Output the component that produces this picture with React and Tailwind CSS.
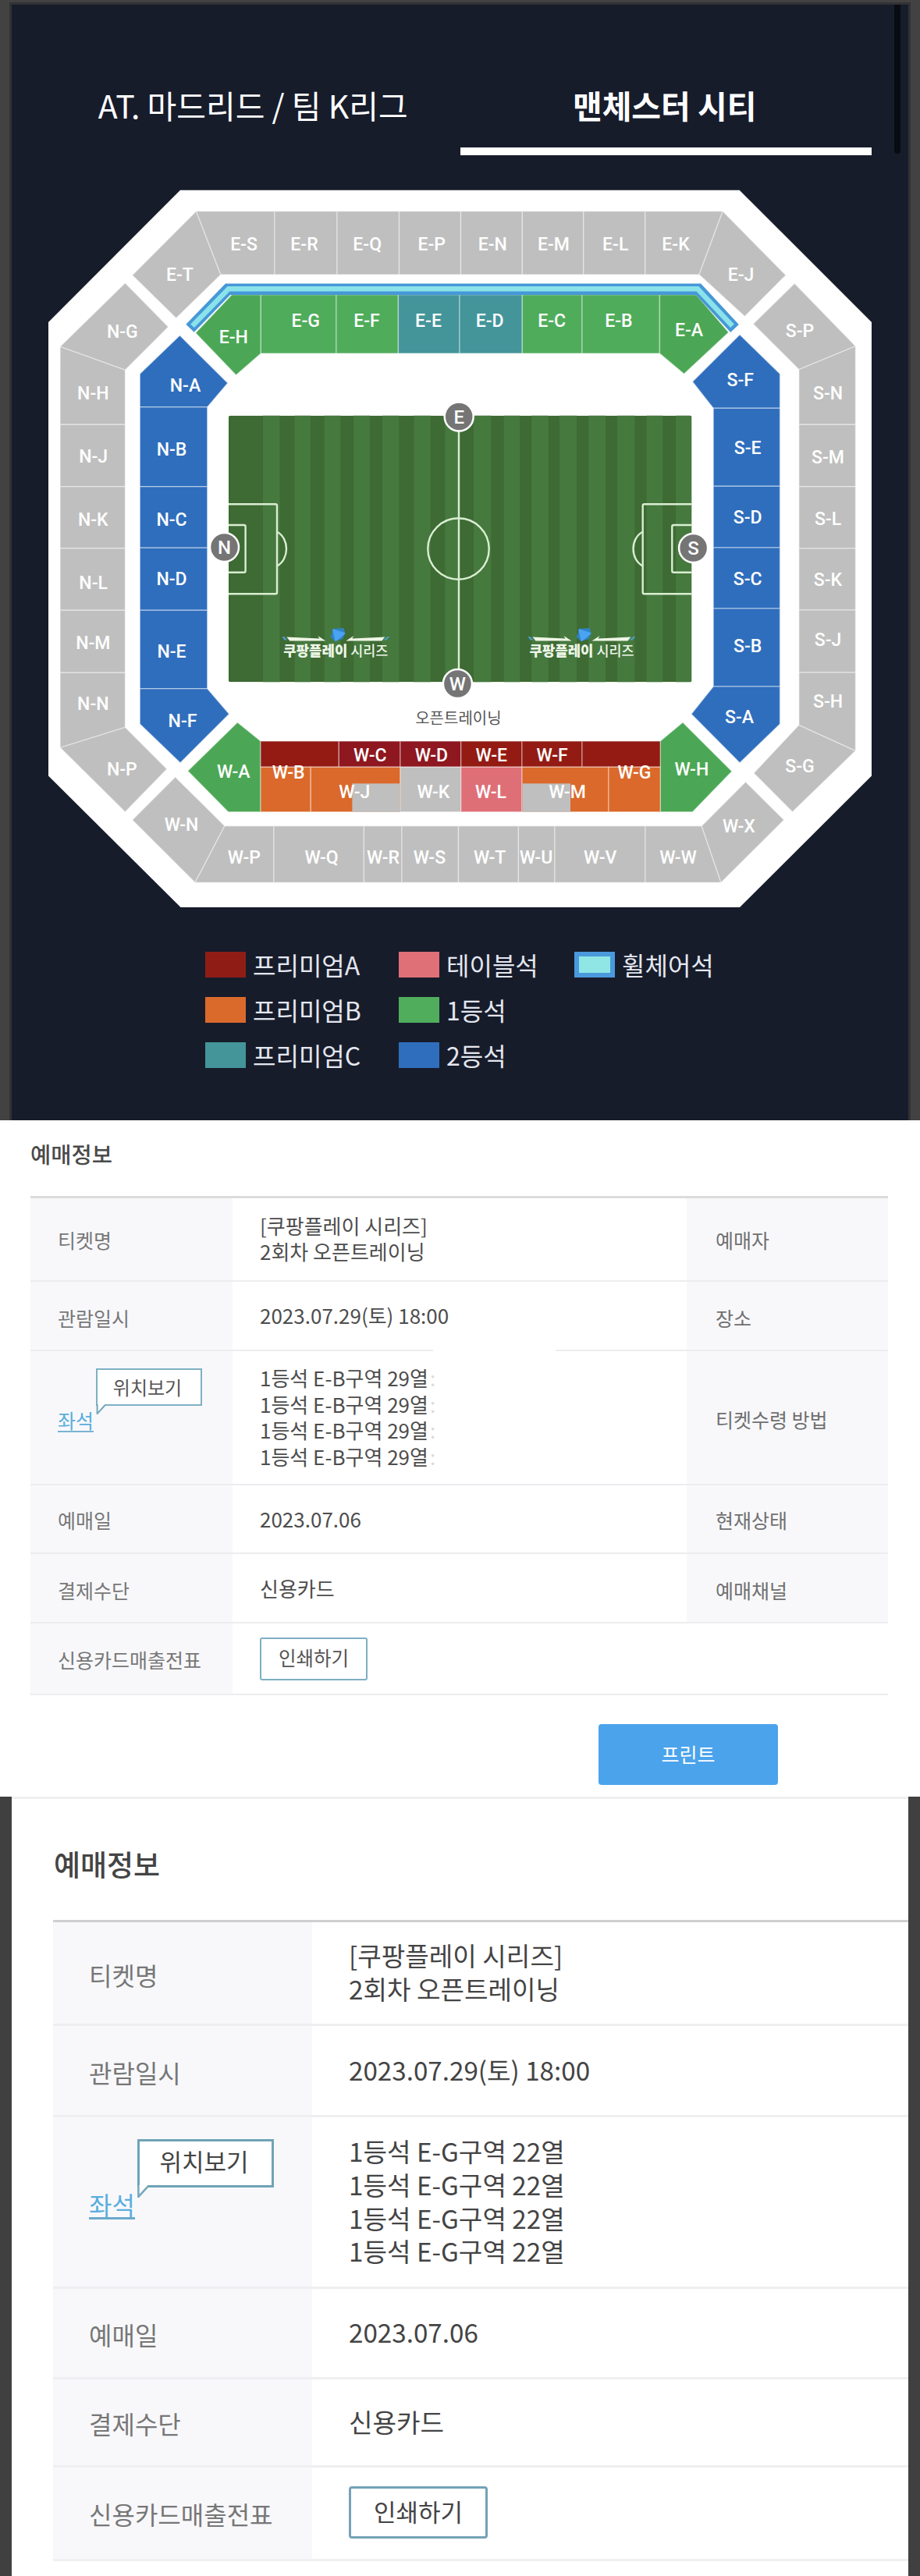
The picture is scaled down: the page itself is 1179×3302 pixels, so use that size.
const GRAY = "#bfbfbf";
const GREEN = "#4fac5b";
const DEEP_GREEN = "#4ba755";
const TEAL = "#43959a";
const BLUE = "#2f6ebd";
const RED = "#931b13";
const CRIMSON = "#8e1720";
const ORANGE = "#da692b";
const PINK = "#df6f77";

const box = (x1, y1, x2, y2) => `${x1},${y1} ${x2},${y1} ${x2},${y2} ${x1},${y2}`;

// Each block: [polygon points, fill]
const blocks = [
  // outer ring, east
  ["251.4,270.7 169.6,352.7 225.7,407.7 282.9,352", GRAY],
  ["251.4,270.7 352,270.7 352,352 282.9,352", GRAY],
  [box(352, 270.7, 432, 352), GRAY],
  [box(432, 270.7, 511.5, 352), GRAY],
  [box(511.5, 270.7, 590.5, 352), GRAY],
  [box(590.5, 270.7, 669.3, 352), GRAY],
  [box(669.3, 270.7, 747.8, 352), GRAY],
  [box(747.8, 270.7, 826.7, 352), GRAY],
  ["826.7,270.7 926.2,270.7 896,352 826.7,352", GRAY],
  ["926.2,270.7 1007,352.7 954.4,405.5 896,352", GRAY],
  // outer ring, north
  ["160.4,362.7 215.7,419 160.4,474.3 77.1,444.3", GRAY],
  ["77.1,444.3 160.4,474.3 160.4,544.3 77.1,544.3", GRAY],
  [box(77.1, 544.3, 160.4, 623.7), GRAY],
  [box(77.1, 623.7, 160.4, 702.7), GRAY],
  [box(77.1, 702.7, 160.4, 782.3), GRAY],
  [box(77.1, 782.3, 160.4, 862.3), GRAY],
  ["77.1,862.3 160.4,862.3 160.4,932.3 77.1,958.3", GRAY],
  ["77.1,958.3 160.4,932.3 213.9,985.7 160.4,1040.7", GRAY],
  // outer ring, west
  ["224.6,996 287.9,1058.7 250,1131.3 169.6,1051", GRAY],
  ["287.9,1058.7 351,1058.7 351,1131.3 250,1131.3", GRAY],
  [box(351, 1058.7, 466.4, 1131.3), GRAY],
  [box(466.4, 1058.7, 515, 1131.3), GRAY],
  [box(515, 1058.7, 587.5, 1131.3), GRAY],
  [box(587.5, 1058.7, 664.4, 1131.3), GRAY],
  [box(664.4, 1058.7, 711, 1131.3), GRAY],
  [box(711, 1058.7, 827, 1131.3), GRAY],
  ["827,1058.7 899.2,1058.7 924,1131.3 827,1131.3", GRAY],
  ["899.2,1058.7 955.5,1002.3 1004.7,1051 924,1131.3", GRAY],
  // outer ring, south
  ["1023.9,929.3 1096.4,962.3 1015.6,1040.7 966,991", GRAY],
  ["1018.2,363.3 1096.4,443.7 1023.9,473.7 965.3,415.3", GRAY],
  ["1096.4,443.7 1096.4,544.3 1023.9,544.3 1023.9,473.7", GRAY],
  [box(1023.9, 544.3, 1096.4, 623.7), GRAY],
  [box(1023.9, 623.7, 1096.4, 703), GRAY],
  [box(1023.9, 703, 1096.4, 782), GRAY],
  [box(1023.9, 782, 1096.4, 862), GRAY],
  ["1023.9,862 1096.4,862 1096.4,962.3 1023.9,929.3", GRAY],
  // inner ring, east
  ["250.7,426.7 297,377.7 334.3,377.7 334.3,453 302.5,480.7", DEEP_GREEN],
  [box(334.3, 377.7, 431, 453), GREEN],
  [box(431, 377.7, 510.4, 453), GREEN],
  [box(510.4, 377.7, 589, 453), TEAL],
  [box(589, 377.7, 669.3, 453), TEAL],
  [box(669.3, 377.7, 746, 453), GREEN],
  [box(746, 377.7, 845.4, 453), GREEN],
  ["845.4,377.7 892.4,377.7 933.7,426 876.6,479.3 845.4,453", DEEP_GREEN],
  // inner ring, north
  ["230.4,430 291.8,491 265.7,521.7 179.3,521.7 179.3,479.3", BLUE],
  [box(179.3, 521.7, 265.7, 623.7), BLUE],
  [box(179.3, 623.7, 265.7, 702.3), BLUE],
  [box(179.3, 702.3, 265.7, 782.3), BLUE],
  [box(179.3, 782.3, 265.7, 882.7), BLUE],
  ["179.3,882.7 265.7,882.7 293.6,915.3 231,977.7 179.3,928", BLUE],
  // inner ring, south
  ["948,429 999.5,479.3 999.5,523.3 914.2,523.3 887.5,489.3", BLUE],
  [box(914.2, 523.3, 999.5, 623.3), BLUE],
  [box(914.2, 623.3, 999.5, 702), BLUE],
  [box(914.2, 702, 999.5, 780), BLUE],
  [box(914.2, 780, 999.5, 880), BLUE],
  ["914.2,880 999.5,880 999.5,928 948,977.7 886,915.3", BLUE],
  // inner ring, west
  ["304.3,926 334,950 334,1040.7 292.5,1040.7 240.7,988.3", DEEP_GREEN],
  ["875,926 937.9,988.7 887.5,1040.7 846.2,1040.7 846.2,950", DEEP_GREEN],
  [box(334, 950, 434.3, 983.3), RED],
  [box(434.3, 950, 513, 983.3), CRIMSON],
  [box(513, 950, 590.7, 983.3), CRIMSON],
  [box(590.7, 950, 669, 983.3), RED],
  [box(669, 950, 746, 983.3), RED],
  [box(746, 950, 846.2, 983.3), RED],
  [box(334, 983.3, 398.2, 1040.7), ORANGE],
  [box(398.2, 983.3, 513, 1040.7), ORANGE],
  [box(513, 983.3, 590.7, 1040.7), GRAY],
  [box(590.7, 983.3, 669, 1040.7), PINK],
  [box(669, 983.3, 780, 1040.7), ORANGE],
  [box(780, 983.3, 846.2, 1040.7), ORANGE],
];

// Each label: [text, centre x, centre y]
const labels = [
  ["E-S", 312.5, 313], ["E-R", 390, 313], ["E-Q", 470.7, 313], ["E-P", 553.2, 313],
  ["E-N", 631.3, 313], ["E-M", 709.5, 313], ["E-L", 788.7, 313], ["E-K", 866, 313],
  ["E-T", 230.4, 352], ["E-J", 949.5, 352],
  ["N-G", 156.8, 424.7], ["N-H", 119.3, 504], ["N-J", 119.6, 584.7], ["N-K", 119.3, 665.3],
  ["N-L", 119.6, 746.3], ["N-M", 119.3, 823.7], ["N-N", 119.3, 902], ["N-P", 156.4, 985.7],
  ["W-N", 232.5, 1057], ["W-P", 312.9, 1098.3], ["W-Q", 412, 1098.3], ["W-R", 491, 1098.3],
  ["W-S", 550.4, 1098.3], ["W-T", 627.6, 1098.3], ["W-U", 687, 1098.3], ["W-V", 769.2, 1098.3],
  ["W-W", 869, 1098.3], ["W-X", 946.9, 1058.7],
  ["S-G", 1025, 981.7], ["S-P", 1025, 423.3], ["S-N", 1061, 504], ["S-M", 1061, 585.3],
  ["S-L", 1061, 664.3], ["S-K", 1061, 742.7], ["S-J", 1061, 819.7], ["S-H", 1061, 899],
  ["E-H", 299.3, 431.7], ["E-G", 391.8, 410.3], ["E-F", 470, 410.3], ["E-E", 549, 410.3],
  ["E-D", 627.6, 410.3], ["E-C", 707.2, 410.3], ["E-B", 792.9, 410.3], ["E-A", 883, 422.3],
  ["N-A", 237.5, 493.7], ["N-B", 220, 575.7], ["N-C", 220, 665.3], ["N-D", 220, 742],
  ["N-E", 220, 834.7], ["N-F", 234, 923.7],
  ["S-F", 948.7, 486.7], ["S-E", 958.1, 573.7], ["S-D", 958.1, 663], ["S-C", 958.1, 741.7],
  ["S-B", 958.1, 827.7], ["S-A", 947.6, 918.7],
  ["W-A", 299.3, 989], ["W-B", 369.6, 990], ["W-C", 474.3, 967.7], ["W-D", 552.9, 967.7],
  ["W-E", 629.8, 967.7], ["W-F", 707.6, 967.7], ["W-G", 813, 990], ["W-H", 886.4, 985.7],
  ["W-J", 454.3, 1014.3], ["W-K", 555.4, 1014.3], ["W-L", 629, 1014.3], ["W-M", 727, 1014.3],
];

const stripes = [
  [337, 21.5], [377.5, 20.5], [415.7, 20.7], [453.2, 20.8], [490, 21.4], [530.4, 21.4],
  [570.4, 17.4], [607, 22.4], [645.6, 20.7], [681.3, 21.4], [717, 22.1], [754.2, 21.8],
  [791, 22.5], [828.5, 20.7], [866, 20.4],
];

const compass = [
  ["E", 588.2, 534], ["N", 287.5, 701.5], ["S", 888.6, 702.5], ["W", 586.4, 876.5],
];

function SeriesLogo({ x }) {
  return (
    <g transform={`translate(${x} 0)`}>
      <path d="M4 816.500l42 2-2-3.500 10 6.500H8z" fill="#eef5e6" />
      <path d="M130 816.500l-42 2 2-3.500-10 6.500h46z" fill="#eef5e6" />
      <path d="M-2 816h3l4 4.500H1zM133 816h3l-4 4.500h-4z" fill="#4a9cc0" />
      <path d="M63 806l14-1 2 6-3 8-10 3-6-6 2-3z" fill="#2f83c4" />
      <path d="M64 807.500l14 4.500-11 9z" fill="#4ba3f2" stroke="#4ba3f2" strokeWidth="2" strokeLinejoin="round" />
      <text x="0" y="841" fontSize="18.500" fontWeight="900" textLength="82" lengthAdjust="spacingAndGlyphs" fill="#eef6e8">
        쿠팡플레이
      </text>
      <text x="86" y="841" fontSize="18.500" fontWeight="500" textLength="48" lengthAdjust="spacingAndGlyphs" fill="#eef6e8">
        시리즈
      </text>
    </g>
  );
}

function SeatMap() {
  return (
    <svg
      viewBox="62 243 1055 920"
      className="mt-[44px] ml-[47px] block h-[920px] w-[1055px] shrink-0 font-['Roboto','Noto_Sans_CJK_KR',sans-serif]"
    >
      <polygon points="231,243.7 947.6,243.7 1117,413 1117,994.5 948,1163 231.5,1163 62,994.5 62,413" fill="#fff" />
      {blocks.map(([points, fill], i) => (
        <polygon key={i} points={points} fill={fill} stroke="#fff" strokeOpacity="0.4" strokeWidth="1.4" />
      ))}
      <rect x="451.4" y="1004.3" width="61" height="36.4" fill={GRAY} />
      <rect x="669.5" y="1004.3" width="61.5" height="36.4" fill={GRAY} />

      {/* wheelchair seats */}
      <polyline points="243.5,420.8 292,370.7 895,370.7 941.5,421" fill="none" stroke="#4698d8" strokeWidth="14.500" />
      <polyline points="246.5,417.700 293,370.2 894,370.2 938.5,417.700" fill="none" stroke="#8be3ea" strokeWidth="6.500" />

      {/* pitch */}
      <clipPath id="pitch">
        <rect x="293" y="532.7" width="593.4" height="341.6" rx="2" />
      </clipPath>
      <g clipPath="url(#pitch)">
        <rect x="293" y="532.7" width="593.4" height="341.6" fill="#3e6a33" />
        {stripes.map(([x, w]) => (
          <rect key={x} x={x} y="532" width={w} height="343" fill="#46793e" />
        ))}
        <g fill="none" stroke="#d9eed2" strokeWidth="2.400">
          <path d="M588 534V876" />
          <circle cx="587.5" cy="703.5" r="39.2" />
          <rect x="280" y="646.3" width="75" height="115" rx="2" />
          <rect x="280" y="673" width="34.6" height="60.7" rx="2" />
          <path d="M355 681.7C371 690 371 717 355 725.500" />
          <rect x="823.7" y="646.3" width="75" height="115" rx="2" />
          <rect x="861.3" y="673" width="40" height="60.7" rx="2" />
          <path d="M823.700 681.7C807.500 690 807.500 717 823.700 725.500" />
        </g>
        <SeriesLogo x={363.3} />
        <SeriesLogo x={678.5} />
      </g>

      {compass.map(([name, x, y]) => (
        <g key={name}>
          <circle cx={x} cy={y} r="18.500" fill="#757575" stroke="#fff" strokeWidth="2.500" />
          <text x={x} y={y + 8.7} fontSize="24" fontWeight="500" textAnchor="middle" fill="#fff">
            {name}
          </text>
        </g>
      ))}
      <text x="587.4" y="927.5" fontSize="20" textAnchor="middle" fill="#555">
        오픈트레이닝
      </text>
      {labels.map(([name, x, y]) => (
        <text key={name} x={x} y={y + 8.2} fontSize="23" fontWeight="500" textAnchor="middle" fill="#fff">
          {name}
        </text>
      ))}
    </svg>
  );
}

function LegendItem({ swatch, children }) {
  return (
    <div className="flex h-[33px] items-center gap-[9px] text-[32px] leading-none text-[#e4e7ef]">
      <span className={`h-[33px] w-[52px] shrink-0 ${swatch}`} />
      <span className="pb-[2px] whitespace-nowrap">{children}</span>
    </div>
  );
}

function Legend() {
  return (
    <div className="mt-[57px] ml-[248px] flex">
      <div className="flex w-[248px] flex-col gap-[25px]">
        <LegendItem swatch="bg-[#8f1d16]">프리미엄A</LegendItem>
        <LegendItem swatch="bg-[#da6a2c]">프리미엄B</LegendItem>
        <LegendItem swatch="bg-[#439599]">프리미엄C</LegendItem>
      </div>
      <div className="flex w-[225px] flex-col gap-[25px]">
        <LegendItem swatch="bg-[#df7077]">테이블석</LegendItem>
        <LegendItem swatch="bg-[#50ad5c]">1등석</LegendItem>
        <LegendItem swatch="bg-[#2f6ebc]">2등석</LegendItem>
      </div>
      <LegendItem swatch="border-[6px] border-[#4a99dc] bg-[#90e6e4]">휠체어석</LegendItem>
    </div>
  );
}

function StadiumPanel() {
  return (
    <section className="flex h-[1436px] border-t-[3px] border-[#424242] bg-[#424242] px-[12px]">
      <div className="flex-1 border-x-[3px] border-t-[3px] border-[#323235] bg-[#171c2b]">
        <div className="flex h-[193px]">
          <div className="ml-[47px] flex flex-1 text-[41px] leading-none text-white">
            <div className="flex flex-1 items-end justify-center pr-[3px] pb-[44px]">AT. 마드리드 / 팀 K리그</div>
            <div className="flex flex-1 items-end justify-center border-b-[10px] border-white pr-[3px] pb-[34px] font-bold">
              맨체스터 시티
            </div>
          </div>
          <div className="ml-[29px] h-[191px] w-[8px] rounded-b bg-[#080b12]" />
          <div className="w-[10px]" />
        </div>
        <SeatMap />
        <Legend />
      </div>
    </section>
  );
}

function SeatLabel({ large }) {
  return (
    <div className="relative">
      <span
        className={
          large
            ? "block border-b-[3px] border-[#6aa9cb] pb-[1px] text-[32px] leading-[32px] text-[#5aaede]"
            : "block border-b-2 border-[#7ab3d0] pb-[1px] text-[25px] leading-[25px] text-[#5aaede]"
        }
      >
        좌석
      </span>
      <div
        className={
          large
            ? "absolute -top-[67px] left-[62px] flex h-[62px] w-[175px] items-center justify-center border-[3px] border-[#6fa3b6] bg-white pr-1 pb-1 text-[31px] text-[#444]"
            : "absolute -top-[54px] left-[49px] flex h-[48px] w-[136px] items-center justify-center border-2 border-[#7fb0c4] bg-white pr-1 text-[24px] text-[#555]"
        }
      >
        <span className="whitespace-nowrap">위치보기</span>
        <svg
          viewBox="0 0 15 15"
          className={
            large
              ? "absolute -bottom-[16px] -left-[3px] h-[16px] w-[16px]"
              : "absolute -bottom-[13px] -left-[2px] h-[13px] w-[14px]"
          }
        >
          <path d="M1.300 0V14L13 1.200" fill="#fff" stroke="#75a8bb" strokeWidth="2.400" />
          <path d="M2.600 0H12" stroke="#fff" strokeWidth="2.400" />
        </svg>
      </div>
    </div>
  );
}

function Row({ height, label, labelPad = "", side, children, line = true }) {
  return (
    <div className={`flex ${line ? "border-b-2 border-[#ededf0]" : ""} ${height}`}>
      <div className={`flex w-[259px] shrink-0 items-center bg-[#f8f8fb] pl-[35px] text-[25px] text-[#777] ${labelPad}`}>
        {label}
      </div>
      <div className="flex flex-1 items-center pl-[35px] text-[26px] leading-[33.5px] text-[#4d4d4d]">{children}</div>
      {side && <div className="flex w-[258px] shrink-0 items-center bg-[#f8f8fb] pl-[37px] text-[25px] text-[#707070]">{side}</div>}
    </div>
  );
}

function BookingDesktop() {
  return (
    <section className="flex h-[867px] flex-col bg-white pr-[41px] pl-[39px]">
      <h2 className="mt-[28px] h-[69px] text-[28.5px] leading-[30px] font-medium text-[#4a4a4a]">예매정보</h2>
      <div className="border-t-[3px] border-[#dcdcdc]">
        <Row height="h-[107px]" label="티켓명" labelPad="pt-[2px]" side={<span className="pt-[2px]">예매자</span>}>
          <div className="pb-[3px]">
            <div>[쿠팡플레이 시리즈]</div>
            <div>2회차 오픈트레이닝</div>
          </div>
        </Row>
        <Row height="h-[87px]" label="관람일시" labelPad="pt-[6px]" side={<span className="pt-[6px]">장소</span>} line={false}>
          <span className="pb-[2px]">2023.07.29(토) 18:00</span>
        </Row>
        <div className="flex h-[2px] justify-between">
          <span className="w-[516px] bg-[#ededf0]" />
          <span className="w-[426px] bg-[#ededf0]" />
        </div>
        <Row height="h-[172px]" label={<SeatLabel />} labelPad="pt-[9px]" side={<span className="pt-[5px]">티켓수령 방법</span>}>
          <div className="pb-[2px]">
            {[0, 1, 2, 3].map((i) => (
              <div key={i}>
                1등석 E-B구역 29열<span className="ml-[2px] text-[#dcdcdc]">:</span>
              </div>
            ))}
          </div>
        </Row>
        <Row height="h-[88px]" label="예매일" labelPad="pt-[4px]" side={<span className="pt-[4px]">현재상태</span>}>
          2023.07.06
        </Row>
        <Row height="h-[89px]" label="결제수단" labelPad="pt-[6px]" side={<span className="pt-[6px]">예매채널</span>}>
          신용카드
        </Row>
        <Row height="h-[92px]" label="신용카드매출전표" labelPad="pt-[4px]">
          <button className="h-[55px] w-[138px] rounded-[3px] border-2 border-[#7fafc4] pb-[3px] text-[24.5px] text-[#555]">
            인쇄하기
          </button>
        </Row>
      </div>
      <button className="mt-[37px] mr-[141px] h-[78px] w-[230px] self-end rounded-[4px] bg-[#4ba3ec] text-[25px] text-white">
        프린트
      </button>
    </section>
  );
}

function LargeRow({ height, label, labelPad = "", children }) {
  return (
    <div className={`flex border-b-[3px] border-[#efeff1] ${height}`}>
      <div className={`flex w-[332px] shrink-0 items-center bg-[#f8f8fb] pl-[46px] text-[32px] text-[#777] ${labelPad}`}>
        {label}
      </div>
      <div className="flex flex-1 items-center pb-[2px] pl-[47px] text-[33.2px] leading-[42.8px] text-[#444]">
        {children}
      </div>
    </div>
  );
}

function BookingZoomed() {
  return (
    <section className="h-[999px] bg-[#404040] px-[15px]">
      <div className="h-full border-t-[3px] border-[#efefef] bg-white pl-[53px]">
        <h2 className="h-[155px] pt-[61px] pl-[1px] text-[37px] leading-[44px] font-medium text-[#444]">예매정보</h2>
        <div className="border-t-[3px] border-[#cfcfcf]">
          <LargeRow height="h-[133px]" label="티켓명" labelPad="pt-[4px]">
            <div>
              <div>[쿠팡플레이 시리즈]</div>
              <div>2회차 오픈트레이닝</div>
            </div>
          </LargeRow>
          <LargeRow height="h-[117px]" label="관람일시" labelPad="pt-[3px]">
            2023.07.29(토) 18:00
          </LargeRow>
          <LargeRow height="h-[220px]" label={<SeatLabel large />} labelPad="pt-[8px]">
            <div>
              {[0, 1, 2, 3].map((i) => (
                <div key={i}>1등석 E-G구역 22열</div>
              ))}
            </div>
          </LargeRow>
          <LargeRow height="h-[116px]" label="예매일" labelPad="pt-[3px]">
            2023.07.06
          </LargeRow>
          <LargeRow height="h-[113px]" label="결제수단" labelPad="pt-[2px]">
            신용카드
          </LargeRow>
          <LargeRow height="h-[120px]" label="신용카드매출전표">
            <button className="h-[67px] w-[178px] rounded-[4px] border-[3px] border-[#74a3b6] pb-[2px] text-[31px] text-[#444]">
              인쇄하기
            </button>
          </LargeRow>
        </div>
      </div>
    </section>
  );
}

export default function App() {
  return (
    <main className="h-[3302px] w-[1179px] overflow-hidden bg-white font-['Noto_Sans_CJK_KR',sans-serif]">
      <StadiumPanel />
      <BookingDesktop />
      <BookingZoomed />
    </main>
  );
}
